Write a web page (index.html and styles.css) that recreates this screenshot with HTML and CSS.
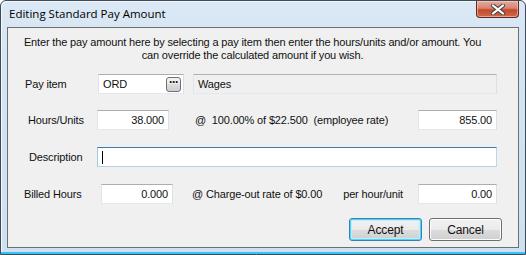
FILE: index.html
```html
<html>
  <head>
    <link rel="stylesheet" href="styles.css">
  </head>
  <body>
    <div class="window">
      <div class="titlebar">
        <span class="title">Editing Standard Pay Amount</span>
        <div class="close">
          <svg width="16" height="11" viewBox="0 0 16 11">
            <path d="M3 1.5 L13 9.5 M13 1.5 L3 9.5" stroke="#4a4a4a" stroke-width="4.2" stroke-linecap="round"/>
            <path d="M3 1.5 L13 9.5 M13 1.5 L3 9.5" stroke="#ffffff" stroke-width="2.2" stroke-linecap="round"/>
          </svg>
        </div>
      </div>

      <div class="client">
        <div class="intro">
          Enter the pay amount here by selecting a pay item then enter the hours/units and/or amount. You<br />
          can override the calculated amount if you wish.
        </div>

        <div class="row row-payitem">
          <span class="label">Pay item</span>
          <div class="field field-code">
            <span>ORD</span>
            <span class="dots">&middot;&middot;&middot;</span>
          </div>
          <div class="field field-wages">Wages</div>
        </div>

        <div class="row row-hours">
          <span class="label">Hours/Units</span>
          <div class="field num">38.000</div>
          <span class="rate">@&nbsp;&nbsp;100.00% of $22.500&nbsp;&nbsp;(employee rate)</span>
          <div class="field num amount">855.00</div>
        </div>

        <div class="row row-desc">
          <span class="label">Description</span>
          <div class="field field-desc focused"><span class="caret"></span></div>
        </div>

        <div class="row row-billed">
          <span class="label">Billed Hours</span>
          <div class="field num">0.000</div>
          <span class="charge">@ Charge-out rate of $0.00</span>
          <span class="per">per hour/unit</span>
          <div class="field num amount">0.00</div>
        </div>

        <div class="buttons">
          <div class="button default">Accept</div>
          <div class="button">Cancel</div>
        </div>
      </div>
    </div>
  </body>
</html>
```

FILE: styles.css
```css
*{
    box-sizing: border-box;
}
body{
    margin: 0;
    width: 526px;
    height: 255px;
    overflow: hidden;
    background: #ffffff;
}
.window{
    width: 526px;
    height: 255px;
    border: 1px solid #3c4a5a;
    border-radius: 6px 6px 0 0;
    background: linear-gradient(to bottom, #dbe8f5 0%, #d2e3f3 40%, #cfe0f1 100%);
    padding: 0 6px 0 6px;
    box-shadow: inset 0 -2px 0 #34c4f0, inset 1px 1px 0 #f4f8fc;
}
.titlebar{
    height: 26px;
    display: flex;
    justify-content: space-between;
    align-items: flex-start;
}
.title{
    font-family: "Open Sans", sans-serif;
    font-size: 11.5px;
    color: #000;
    margin: 5px 0 0 2px;
}
.close{
    width: 43px;
    height: 17px;
    border: 1px solid #5e2a20;
    border-top: none;
    border-radius: 0 0 4px 4px;
    background: linear-gradient(to bottom, #e9a99a 0%, #d98470 45%, #c24a30 55%, #cf6a45 100%);
    box-shadow: inset 0 0 0 1px rgba(255,220,210,0.5);
    display: flex;
    align-items: center;
    justify-content: center;
}
.client{
    height: 221px;
    border: 1px solid #6d6f73;
    background: #f0f0f0;
    font-family: "Liberation Sans", Arial, sans-serif;
    font-size: 11px;
    letter-spacing: -0.15px;
    color: #111;
    padding: 8px 21px 0 0;
}
.intro{
    text-align: center;
    line-height: 13px;
    padding-left: 0;
}
.row{
    display: flex;
    align-items: center;
    height: 20px;
}
.label{
    flex: none;
}
.field{
    height: 20px;
    background: #fff;
    border: 1px solid #abadb3;
    border-left-color: #e2e3ea;
    border-right-color: #dbdfe6;
    border-bottom-color: #e3e9ef;
    padding: 0 4px;
    display: flex;
    align-items: center;
}
.num{
    width: 72px;
    justify-content: flex-end;
}
.amount{
    width: 79px;
    margin-left: auto;
}
.row-payitem{
    margin-top: 12px;
    padding-left: 17px;
}
.row-payitem .label{
    width: 73px;
}
.field-code{
    width: 86px;
    justify-content: space-between;
    padding-right: 2px;
}
.dots{
    width: 15px;
    height: 15px;
    border: 1px solid #707070;
    border-radius: 3px;
    background: linear-gradient(to bottom, #f2f2f2 0%, #ebebeb 50%, #dddddd 50%, #cfcfcf 100%);
    font-size: 12px;
    font-weight: bold;
    line-height: 9px;
    text-align: center;
    letter-spacing: -1px;
}
.field-wages{
    width: 304px;
    margin-left: 9px;
    background: #f0f0f0;
    border-color: #adb2b5;
    border-left-color: #e2e3ea;
    border-right-color: #dbdfe6;
    border-bottom-color: #e3e9ef;
}
.row-hours{
    margin-top: 16px;
    padding-left: 20px;
}
.row-hours .label{
    width: 69px;
}
.rate{
    margin-left: 26px;
}
.row-desc{
    margin-top: 17px;
    padding-left: 21px;
}
.row-desc .label{
    width: 68px;
}
.field-desc{
    flex: 1;
}
.focused{
    border-color: #3d7bad;
    border-left-color: #a4c9e3;
    border-right-color: #b7d9ed;
    border-bottom-color: #b5cfe7;
}
.caret{
    width: 1px;
    height: 13px;
    background: #000;
}
.row-billed{
    margin-top: 17px;
    padding-left: 16px;
}
.row-billed .label{
    width: 77px;
}
.charge{
    margin-left: 19px;
}
.per{
    margin-left: 21px;
}
.buttons{
    display: flex;
    justify-content: flex-end;
    gap: 7px;
    margin-top: 14px;
    margin-right: -5px;
}
.button{
    width: 73px;
    height: 23px;
    border: 1px solid #707070;
    border-radius: 3px;
    background: linear-gradient(to bottom, #f2f2f2 0%, #ebebeb 50%, #dddddd 50%, #cfcfcf 100%);
    box-shadow: inset 0 0 0 1px #fcfcfc;
    display: flex;
    align-items: center;
    justify-content: center;
    font-size: 12px;
}
.default{
    border-color: #3c7fb1;
    box-shadow: inset 0 0 0 1px #48d8fb, inset 0 0 0 2px #c4ebf8;
}
```
